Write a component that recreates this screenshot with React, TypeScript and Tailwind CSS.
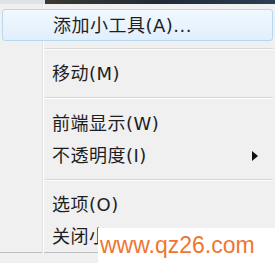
import React from "react";

const font = { fontFamily: '"DejaVu Sans", "Noto Sans CJK SC", sans-serif' };

function Sep({ h }: { h: string }) {
  return (
    <div className={`flex items-center ${h}`}>
      <div className="ml-[45px] mr-[2px] flex-1">
        <div className="h-px bg-[#d7d7d7]" />
        <div className="h-px bg-white" />
      </div>
    </div>
  );
}

function Item({ label, arrow }: { label: string; arrow?: boolean }) {
  return (
    <div className="flex h-[32px] items-center pl-[52px] pr-[14px] pt-[2px] text-[18px] tracking-[0.5px] text-[#1e1e1e]">
      <span className="flex-1 leading-none">{label}</span>
      {arrow && (
        <svg width="6" height="10" viewBox="0 0 6 10" className="mr-[3px]">
          <path d="M0 0 L6 5 L0 10 Z" fill="#111" />
        </svg>
      )}
    </div>
  );
}

export default function App() {
  return (
    <div
      className="relative h-[263px] w-[275px] overflow-hidden bg-[#f0f0f0]"
      style={font}
    >
      <div className="flex h-[4px]">
        <div className="w-[45px] bg-[#dfe3e6]" />
        <div className="flex-1 bg-gradient-to-r from-[#3b3a30] via-[#1f2a36] to-[#2c3e55]" />
      </div>
      <div className="relative">
        <div className="absolute bottom-0 left-[42px] top-0 w-px bg-[#e2e3e3]" />
        <div className="absolute bottom-0 left-[43px] top-0 w-px bg-white" />
        <div className="relative pt-[5px]">
          <div className="mx-[2px] flex h-[32px] items-center rounded-[3px] border border-[#b4d9f2] bg-gradient-to-b from-[#f1f8fe] to-[#e1effc] pl-[50px] pt-[2px] text-[18px] tracking-[0.5px] text-[#1e1e1e]">
            <span className="leading-none">添加小工具(A)...</span>
          </div>
          <Sep h="h-[16px]" />
          <Item label="移动(M)" />
          <Sep h="h-[18px]" />
          <Item label="前端显示(W)" />
          <Item label="不透明度(I)" arrow />
          <Sep h="h-[17px]" />
          <Item label="选项(O)" />
          <Item label="关闭小工具(C)" />
        </div>
        <div className="h-px bg-[#bdbdbd]" />
      </div>
      <div className="absolute left-[98px] top-[228px] flex h-[35px] w-[177px] items-center bg-white pl-[2px]">
        <span
          className="text-[23px] leading-none text-[#ef7632]"
          style={{ fontFamily: '"Liberation Sans", Arial, sans-serif' }}
        >
          www.qz26.com
        </span>
      </div>
    </div>
  );
}
